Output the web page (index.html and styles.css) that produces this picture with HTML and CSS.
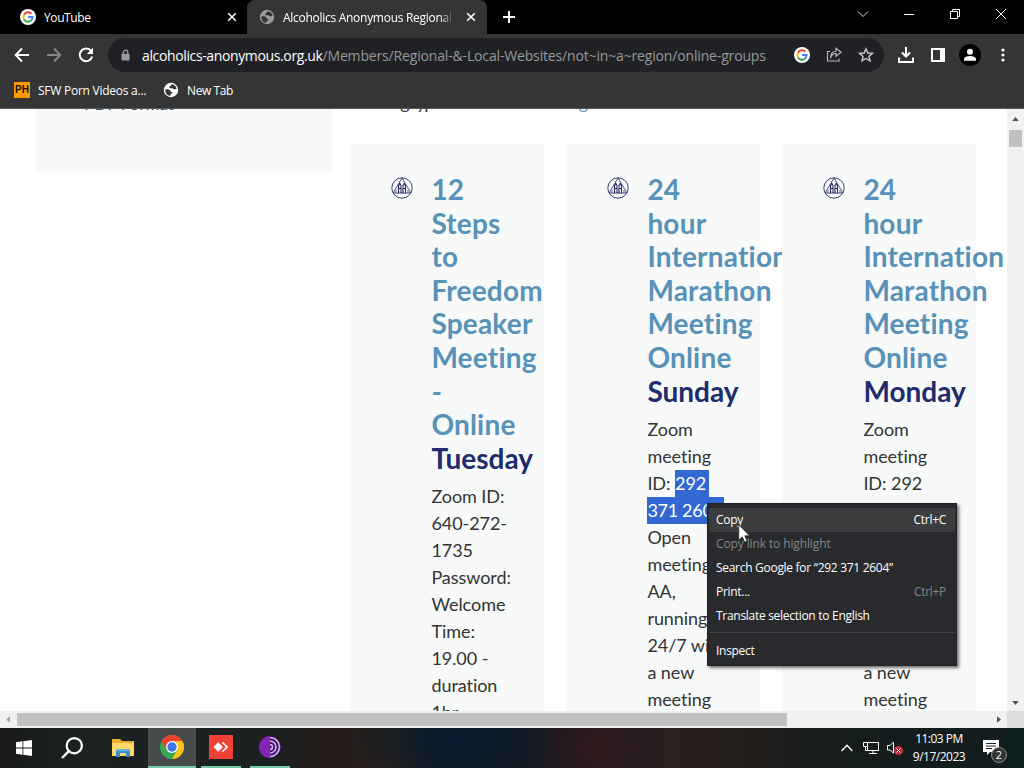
FILE: index.html
```
<!DOCTYPE html>
<html lang="en">
<head>
    <meta charset="UTF-8">
    <meta name="viewport" content="width=device-width, initial-scale=1.0">
    <title>Alcoholics Anonymous Regional</title>
    <link rel="stylesheet" href="styles.css">
</head>
<body>
    <svg class="defs" width="0" height="0">
        <symbol id="google" viewBox="0 0 16 16">
            <circle cx="8" cy="8" r="8" fill="#fff"/>
            <g fill="none" stroke-width="2">
                <path d="M11.4 4.7A4.6 4.6 0 0 0 4 5.7" stroke="#ea4335"/>
                <path d="M4 5.7A4.6 4.6 0 0 0 4 10.4" stroke="#fbbc05"/>
                <path d="M4 10.4A4.6 4.6 0 0 0 11 11.6" stroke="#34a853"/>
                <path d="M8 8H12.6A4.6 4.6 0 0 1 11 11.6" stroke="#4285f4"/>
            </g>
        </symbol>
        <symbol id="globe" viewBox="0 0 16 16">
            <circle cx="8" cy="8" r="7.2" fill="currentColor"/>
            <path class="land" d="M2.3 7.4C4 7.2 5.7 7 7 8.2c1 .9.4 1.7 1.5 1.8 1.4.1 1.5 1.2.2 1.4-1.3.2-.7 1.4-1.5 2.4C4 13.6 2.3 11 2.3 7.4zM9 2.3c-1.3.3-.5 1.2-1.7 1.6-1.2.5-1.5 1.3-.4 2.1 1 .8 2.5-.2 3.2.7.8 1 2.5.6 3.5 0-.5-2.3-2.2-4.1-4.6-4.4z"/>
        </symbol>
        <symbol id="x" viewBox="0 0 10 10">
            <path d="M1.2 1.2L8.8 8.8M8.8 1.2L1.2 8.8" fill="none" stroke="currentColor" stroke-width="1.6"/>
        </symbol>
        <symbol id="aa" viewBox="0 0 22 22">
            <g fill="none" stroke="#2a2868">
                <circle cx="11" cy="11" r="10.2" stroke-width=".9"/>
                <path d="M11 1L20 16H2Z" stroke-width=".8"/>
                <path d="M7.5 16.5V8.5L8.8 6.5 10 8.5V16.5M12 16.5V8.5L13.2 6.5 14.5 8.5V16.5M7.5 11.5H10M12 11.5h2.5" stroke-width="1.1"/>
                <path d="M5 13v3M17 13v3" stroke-width=".7"/>
            </g>
        </symbol>
    </svg>

    <div class="screen">
        <div class="tabs">
            <div class="tab">
                <svg class="fav"><use href="#google"/></svg>
                <span class="tab-title">YouTube</span>
                <svg class="close"><use href="#x"/></svg>
            </div>
            <div class="tab active">
                <svg class="fav globe-gray"><use href="#globe"/></svg>
                <span class="tab-title fade">Alcoholics Anonymous Regional</span>
                <svg class="close"><use href="#x"/></svg>
            </div>
            <svg class="plus" viewBox="0 0 12 12"><path d="M6 0V12M0 6H12" stroke="#fff" stroke-width="2"/></svg>
            <div class="window-buttons">
                <svg viewBox="0 0 12 12"><path d="M1 3.5L6 8.5L11 3.5" fill="none" stroke="#ddd"/></svg>
                <svg viewBox="0 0 12 12"><path d="M1 6.5H11" stroke="#fff"/></svg>
                <svg viewBox="0 0 12 12"><path d="M1.5 3.5H8.5V10.5H1.5ZM3.5 3.5V1.5H10.5V8.5H8.5" fill="none" stroke="#fff"/></svg>
                <svg viewBox="0 0 12 12"><path d="M1 1L11 11M11 1L1 11" stroke="#fff"/></svg>
            </div>
        </div>

        <div class="toolbar">
            <svg class="nav" viewBox="0 0 16 16"><path d="M15 8H2M8 1.5L1.7 8L8 14.5" fill="none" stroke="#fff" stroke-width="2"/></svg>
            <svg class="nav" viewBox="0 0 16 16"><path d="M1 8H14M8 1.5L14.3 8L8 14.5" fill="none" stroke="#858585" stroke-width="2"/></svg>
            <svg class="nav" viewBox="0 0 16 16"><path d="M13.2 4.2A6.3 6.3 0 1 0 14.2 9.4" fill="none" stroke="#fff" stroke-width="2"/><path d="M15 .8V7H8.8Z" fill="#fff"/></svg>
            <div class="address">
                <svg class="lock" viewBox="0 0 10 12"><path d="M2.5 5V3.2a2.5 2.5 0 0 1 5 0V5" fill="none" stroke="#9a9da0" stroke-width="1.4"/><rect x=".5" y="4.5" width="9" height="7.5" rx="1" fill="#9a9da0"/></svg>
                <span class="url"><b>alcoholics-anonymous.org.uk</b>/Members/Regional-&amp;-Local-Websites/not~in~a~region/online-groups</span>
                <svg class="fav"><use href="#google"/></svg>
                <svg class="fav" viewBox="0 0 16 16"><path d="M4 4.5H1.5V14H13V11.5M4.5 11.5C5 8 7 6.5 10 6.4V9.2L15 5.2 10 1.3V4C6.5 4.3 4.5 7 4.5 11.5Z" fill="none" stroke="#b5b7ba" stroke-width="1.2"/></svg>
                <svg class="fav" viewBox="0 0 16 16"><path d="M8 1.8L9.8 6L14.4 6.4L10.9 9.4L12 13.9L8 11.5L4 13.9L5.1 9.4L1.6 6.4L6.2 6Z" fill="none" stroke="#c6c8ca" stroke-width="1.4"/></svg>
            </div>
            <svg class="action" viewBox="0 0 16 16"><path d="M8 0V9M4 5.5L8 9.5L12 5.5M1 10.5V15H15V10.5" fill="none" stroke="#fff" stroke-width="2"/></svg>
            <svg class="action" viewBox="0 0 16 16"><path d="M1 1H15V15H1ZM3 3V13H10V3Z" fill="#fff" fill-rule="evenodd"/></svg>
            <svg class="profile" viewBox="0 0 22 22"><circle cx="11" cy="11" r="11" fill="#000"/><circle cx="11" cy="7.8" r="3" fill="#fff"/><path d="M5 16.8V15.2C5 13 8.5 12 11 12S17 13 17 15.2V16.8Z" fill="#fff"/></svg>
            <svg class="more" viewBox="0 0 4 14"><g fill="#fff"><circle cx="2" cy="2" r="1.6"/><circle cx="2" cy="7" r="1.6"/><circle cx="2" cy="12" r="1.6"/></g></svg>
        </div>

        <div class="bookmarks">
            <span class="ph">PH</span>
            <span class="bookmark first">SFW Porn Videos a...</span>
            <svg class="fav globe-white"><use href="#globe"/></svg>
            <span class="bookmark">New Tab</span>
        </div>

        <div class="viewport">
            <main class="page">
                <aside class="sidebar"><a class="pdf">PDF Format</a></aside>
                <section class="content">
                    <p class="intro"><span>using type</span><a>region</a></p>
                    <div class="cards">
                        <article class="card">
                            <svg class="logo"><use href="#aa"/></svg>
                            <div class="card-text">
                                <h2>12<br>Steps<br>to<br>Freedom<br>Speaker<br>Meeting<br>-<br>Online<br><span>Tuesday</span></h2>
                                <p>Zoom ID:<br>640-272-<br>1735<br>Password:<br>Welcome<br>Time:<br>19.00 -<br>duration<br>1hr</p>
                            </div>
                        </article>
                        <article class="card">
                            <svg class="logo"><use href="#aa"/></svg>
                            <div class="card-text">
                                <h2>24<br>hour<br>International<br>Marathon<br>Meeting<br>Online<br><span>Sunday</span></h2>
                                <p>Zoom<br>meeting<br>ID: <mark>292 </mark><br><mark class="wide">371 2604</mark><br>Open<br>meeting<br>AA,<br>running<br>24/7 with<br>a new<br>meeting</p>
                            </div>
                        </article>
                        <article class="card clipped">
                            <svg class="logo"><use href="#aa"/></svg>
                            <div class="card-text">
                                <h2>24<br>hour<br>International<br>Marathon<br>Meeting<br>Online<br><span>Monday</span></h2>
                                <p>Zoom<br>meeting<br>ID: 292<br>371 2604<br>Open<br>meeting<br>AA,<br>running<br>24/7 with<br>a new<br>meeting</p>
                            </div>
                        </article>
                    </div>
                </section>
            </main>
            <div class="vscroll">
                <svg class="arrow" viewBox="0 0 8 5"><path d="M0 5L4 0L8 5Z" fill="#505050"/></svg>
                <div class="vthumb"></div>
                <svg class="arrow down" viewBox="0 0 8 5"><path d="M0 0L4 5L8 0Z" fill="#505050"/></svg>
            </div>
        </div>
        <div class="hscroll">
            <svg class="arrow-h" viewBox="0 0 5 8"><path d="M5 0L0 4L5 8Z" fill="#a3a3a3"/></svg>
            <div class="hthumb"></div>
            <svg class="arrow-h right" viewBox="0 0 5 8"><path d="M0 0L5 4L0 8Z" fill="#505050"/></svg>
            <div class="corner"></div>
        </div>

        <div class="taskbar">
            <div class="task"><svg width="16" height="16" viewBox="0 0 16 16"><path d="M0 2.3L6.5 1.3V7.5H0ZM7.3 1.2L16 0V7.5H7.3ZM0 8.4H6.5V14.7L0 13.7ZM7.3 8.4H16V16L7.3 14.8Z" fill="#fff"/></svg></div>
            <div class="task"><svg width="22" height="22" viewBox="0 0 22 22"><circle cx="13.3" cy="8.7" r="7.6" fill="none" stroke="#fff" stroke-width="2.2"/><path d="M7.8 14.2L1 21" stroke="#fff" stroke-width="2.4"/></svg></div>
            <div class="task folder"><svg width="22" height="20" viewBox="0 0 22 20"><path d="M0 1H8L10 3H22V18H0Z" fill="#e9ad30"/><path d="M0 5H22V18H0Z" fill="#ffd766"/><path d="M4 11H18V19H14V15H8V19H4Z" fill="#3c8fcc"/><path d="M4 11H18V13H4Z" fill="#67b5e5"/></svg></div>
            <div class="task current"><svg width="24" height="24" viewBox="0 0 24 24"><circle cx="12" cy="12" r="12" fill="#34a853"/><path d="M12 12L1.6 6A12 12 0 0 1 22.4 6Z" fill="#ea4335"/><path d="M22.4 6A12 12 0 0 1 12 24L17.2 15 12 6Z" fill="#fbc116"/><path d="M1.6 6L6.8 15 12 12 12 6Z" fill="#ea4335"/><circle cx="12" cy="12" r="6" fill="#fff"/><circle cx="12" cy="12" r="4.7" fill="#3b78e7"/></svg></div>
            <div class="task open"><svg width="24" height="24" viewBox="0 0 24 24"><path d="M0 0H24V24H0Z" fill="#ef4136"/><path d="M4.5 12L9.2 7.3 13.9 12 9.2 16.7Z" fill="#fff"/><path d="M12.5 7.5L14.5 7.3 19.2 12 14.5 16.7 12.5 16.5 17 12Z" fill="#fff"/></svg></div>
            <div class="task open"><svg width="22" height="22" viewBox="0 0 22 22"><circle cx="11" cy="11" r="11" fill="#39145c"/><path d="M11 0A11 11 0 0 0 11 22Z" fill="#8424b3"/><g fill="none" stroke="#d8a8f3" stroke-width="1.7"><path d="M11 1.5A9.5 9.5 0 0 1 11 20.5M11 5A6 6 0 0 1 11 17M11 8.5A2.5 2.5 0 0 1 11 13.5"/></g></svg></div>
            <div class="tray">
                <svg width="12" height="8" viewBox="0 0 12 8"><path d="M.6 7L6 1.3L11.4 7" fill="none" stroke="#fff" stroke-width="1.3"/></svg>
                <svg width="17" height="14" viewBox="0 0 17 14"><path d="M5 1.5H15.5V9.5H4.5V6M10 9.5V12.5M6 12.5H14M.5 1.5H4.5V5.5H.5ZM2.5 5.5V9.5H4.5" fill="none" stroke="#fff"/></svg>
                <svg width="16" height="14" viewBox="0 0 16 14"><path d="M.5 4.5H3L6.5 1V12L3 9H.5Z" fill="none" stroke="#fff"/><circle cx="11.5" cy="9.5" r="4.5" fill="#c82a3a"/><path d="M9.5 7.5L13.5 11.5M13.5 7.5L9.5 11.5" stroke="#fff"/></svg>
                <div class="clock">11:03 PM<br>9/17/2023</div>
                <div class="notice">
                    <svg width="16" height="16" viewBox="0 0 16 16"><path d="M0 0H16V12H7L4 15V12H0Z" fill="#fff"/><path d="M3 3.5H13M3 6H13M3 8.5H9" stroke="#222"/></svg>
                    <span class="count">2</span>
                </div>
            </div>
        </div>

        <div class="menu">
            <div class="item hover"><span>Copy</span><span>Ctrl+C</span></div>
            <div class="item disabled"><span>Copy link to highlight</span></div>
            <div class="item"><span>Search Google for “292 371 2604”</span></div>
            <div class="item"><span>Print...</span><span class="key">Ctrl+P</span></div>
            <div class="item"><span>Translate selection to English</span></div>
            <hr>
            <div class="item"><span>Inspect</span></div>
        </div>
        <svg class="cursor" viewBox="0 0 12 19"><path d="M.8 .8V16L4.3 12.8 6.7 18 9.1 17 6.8 11.8H11.5Z" fill="#fff" stroke="#222" stroke-width=".7"/></svg>
    </div>
</body>
</html>
```

FILE: styles.css
```
* {
    margin: 0;
    padding: 0;
    box-sizing: border-box;
}

body {
    width: 1024px;
    height: 768px;
    overflow: hidden;
    font-family: "Open Sans", "Noto Sans", sans-serif;
    font-size: 12px;
    color: #fff;
}

svg {
    display: block;
    flex-shrink: 0;
}

.defs {
    position: absolute;
}

.screen {
    position: relative;
    display: flex;
    flex-direction: column;
    height: 768px;
    overflow: hidden;
}

.tabs {
    display: flex;
    height: 34px;
    background: #000;
}

.tab {
    display: flex;
    align-items: center;
    width: 247px;
    padding: 0 10px 0 20px;
    letter-spacing: -0.4px;
}

.tab.active {
    width: 240px;
    padding: 0 11px 0 12px;
    background: #353535;
    border-radius: 8px 8px 0 0;
}

.fav {
    width: 16px;
    height: 16px;
}

.globe-gray {
    color: #9b9b9b;
}

.globe-white {
    color: #fff;
}

.land {
    fill: #353535;
}

.tab-title {
    flex: 1;
    margin-left: 8px;
    white-space: nowrap;
    overflow: hidden;
}

.fade {
    margin-right: 12px;
    letter-spacing: -0.28px;
    -webkit-mask-image: linear-gradient(90deg, #000 92%, transparent);
    mask-image: linear-gradient(90deg, #000 92%, transparent);
}

.close {
    width: 10px;
    height: 10px;
}

.plus {
    width: 12px;
    height: 12px;
    margin: 11px 0 0 16px;
}

.window-buttons {
    display: flex;
    gap: 34px;
    margin: 8px 17px 0 auto;
}

.window-buttons svg {
    width: 12px;
    height: 12px;
}

.toolbar {
    display: flex;
    align-items: center;
    height: 42px;
    padding-left: 14px;
    background: #353535;
}

.nav {
    width: 16px;
    height: 16px;
    margin-right: 16px;
}

.address {
    display: flex;
    align-items: center;
    gap: 16px;
    width: 776px;
    height: 34px;
    margin-left: -2px;
    padding: 0 10px 0 13px;
    border-radius: 17px;
    background: #202124;
}

.lock {
    width: 9px;
    height: 12px;
}

.url {
    flex: 1;
    margin-left: -4px;
    font-size: 14px;
    letter-spacing: -0.16px;
    white-space: nowrap;
    color: #95989c;
}

.url b {
    font-weight: 400;
    letter-spacing: -0.37px;
    color: #fff;
}

.action {
    width: 16px;
    height: 16px;
    margin-left: 14px;
}

.action + .action {
    margin-left: 16px;
}

.profile {
    width: 22px;
    height: 22px;
    margin-left: 13px;
}

.more {
    width: 4px;
    height: 14px;
    margin-left: 20px;
}

.bookmarks {
    display: flex;
    align-items: center;
    height: 33px;
    padding: 0 0 4px 14px;
    background: #353535;
    border-bottom: 1px solid #555;
}

.ph {
    width: 16px;
    height: 16px;
    background: #f90;
    color: #111;
    font: bold 10px/16px "Liberation Sans", sans-serif;
    text-align: center;
}

.bookmark {
    margin-left: 8px;
    letter-spacing: -0.4px;
    white-space: nowrap;
}

.first {
    width: 125px;
    letter-spacing: -0.25px;
}

.viewport {
    display: flex;
    height: 602px;
    background: #fff;
}

.page {
    display: flex;
    align-items: flex-start;
    width: 1007px;
    height: 602px;
    padding-left: 36px;
    overflow: hidden;
    font-family: Lato, sans-serif;
    font-variant-ligatures: none;
}

.sidebar {
    flex-shrink: 0;
    width: 296px;
    height: 64px;
    background: #f7faf9;
}

.pdf {
    display: block;
    margin: -16px 0 0 48px;
    font-size: 17px;
    line-height: 21px;
    color: #304c70;
}

.content {
    flex-shrink: 0;
    width: 675px;
    padding-left: 17.6px;
}

.intro {
    display: flex;
    gap: 122px;
    height: 35px;
    padding-left: 24px;
    font-size: 18px;
    line-height: 27px;
    color: #333;
}

.intro span,
.intro a {
    margin-top: -20px;
}

.intro span {
    letter-spacing: -1.4px;
}

.intro a {
    color: #5b96bd;
}

.cards {
    display: flex;
    gap: 22px;
}

.card {
    position: relative;
    display: flex;
    flex-shrink: 0;
    gap: 18.4px;
    width: 194px;
    height: 600px;
    padding: 29px 0 0 41.4px;
    background: #f7faf9;
}

.logo {
    width: 22px;
    height: 22px;
    margin-top: 4px;
}

.card-text {
    width: 72px;
    white-space: nowrap;
}

h2 {
    margin-bottom: 8px;
    font-size: 28px;
    line-height: 33.6px;
    font-weight: 700;
    letter-spacing: 0.2px;
    color: #5892b8;
}

h2 span {
    letter-spacing: 0;
    color: #202c6c;
}

.clipped h2 {
    width: 142px;
    overflow: hidden;
}

.card p {
    font-size: 18px;
    line-height: 27px;
    letter-spacing: -0.05px;
    color: #333;
}

mark {
    display: inline-block;
    height: 27px;
    padding-right: 3px;
    background: #3367d1;
    color: #fff;
    vertical-align: top;
}

mark.wide {
    width: 77px;
    letter-spacing: -0.3px;
}

.vscroll {
    display: flex;
    flex-direction: column;
    align-items: center;
    width: 17px;
    padding: 8px 0 6px;
    background: #f1f1f1;
}

.arrow {
    width: 7px;
    height: 4px;
}

.vthumb {
    width: 13px;
    height: 17px;
    margin-top: 9px;
    background: #c1c1c1;
}

.down {
    margin-top: auto;
}

.hscroll {
    display: flex;
    align-items: center;
    height: 17px;
    padding-left: 6px;
    background: #f1f1f1;
}

.arrow-h {
    width: 4px;
    height: 7px;
}

.hthumb {
    width: 770px;
    height: 13px;
    margin-left: 7px;
    background: #c1c1c1;
}

.right {
    margin-left: auto;
}

.corner {
    width: 17px;
    height: 17px;
    margin-left: 6px;
    background: #dcdcdc;
}

.taskbar {
    display: flex;
    height: 40px;
    background:
        radial-gradient(ellipse 100px 55px at 455px 10px, #071a2d, transparent),
        radial-gradient(ellipse 70px 60px at 595px 20px, #321a1e, transparent),
        linear-gradient(90deg, #18191b 0, #1b2221 8%, #1b2120 27%, #251b1b 31%, #27211f 39%, #111820 43%, #171a20 57%, #29201f 65%, #241e1c 73%, #171d1d 80%, #101d1d 100%);
}

.task {
    display: flex;
    align-items: center;
    justify-content: center;
    width: 48px;
    margin-right: 1px;
}

.task:first-child,
.task:nth-child(2) {
    margin-right: 0;
}

.folder {
    width: 52px;
    margin-right: 0;
    padding-left: 2px;
}

.current {
    background: #484a4a;
    border-bottom: 2px solid #76c9a5;
}

.open {
    width: 40px;
    margin: 0 5px 0 4px;
    border-bottom: 2px solid #76c9a5;
}

.tray {
    display: flex;
    align-items: center;
    margin-left: auto;
    padding-right: 17px;
}

.tray > svg {
    margin-right: 10px;
}

.tray > svg + svg {
    margin-right: 7px;
}

.clock {
    width: 58px;
    margin-right: 15px;
    line-height: 18px;
    letter-spacing: -0.5px;
    text-align: center;
    white-space: nowrap;
}

.notice {
    position: relative;
    width: 24px;
    height: 16px;
}

.count {
    position: absolute;
    left: 8px;
    top: 7px;
    width: 16px;
    height: 16px;
    border: 1px solid #8b9090;
    border-radius: 50%;
    background: #303536;
    font-size: 11px;
    line-height: 14px;
    text-align: center;
}

/* context menu over the page */
.menu {
    position: absolute;
    left: 707px;
    top: 503px;
    width: 250px;
    height: 163px;
    padding: 4px 1px;
    background: #292a2d;
    border: 1px solid #222326;
    box-shadow: 2px 2px 3px rgba(0, 0, 0, 0.55);
}

.item {
    display: flex;
    justify-content: space-between;
    height: 24px;
    padding: 0 9px 0 7px;
    line-height: 24px;
    letter-spacing: -0.29px;
    white-space: nowrap;
}

.hover {
    background: #3b3c3e;
}

.disabled,
.key {
    color: #85878a;
}

.disabled {
    letter-spacing: -0.12px;
}

.menu hr {
    margin: 4px 0 6px;
    border: 0;
    border-top: 1px solid #3f4144;
}

.cursor {
    position: absolute;
    left: 738px;
    top: 524px;
    width: 12px;
    height: 19px;
}
```
